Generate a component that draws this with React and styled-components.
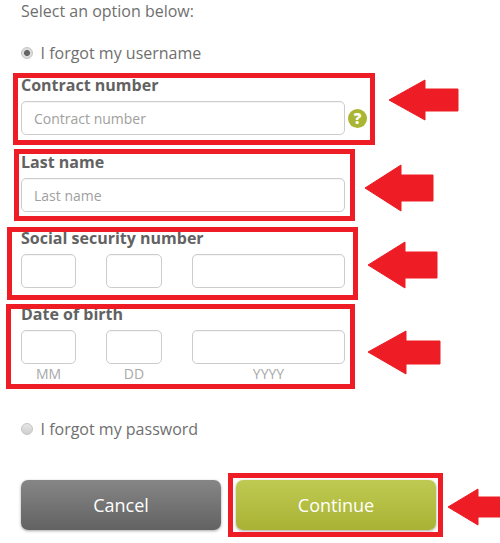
import React from 'react';
import styled, { createGlobalStyle } from 'styled-components';

const Global = createGlobalStyle`
  html, body {
    margin: 0;
    background: #fff;
    font-family: "Open Sans", "Liberation Sans", sans-serif;
  }
`;

const Page = styled.div`
  position: relative;
  width: 500px;
  height: 543px;
  overflow: hidden;
  padding-left: 21px;
  box-sizing: border-box;
  color: #6f6f6f;
`;

const Heading = styled.div`
  font-size: 16px;
  line-height: 22px;
  margin-bottom: 20px;
`;

const OptionRow = styled.label`
  display: flex;
  align-items: center;
  gap: 7.5px;
  font-size: 16px;
  line-height: 22px;
  margin-top: ${p => p.$top || 0}px;
`;

const Radio = styled.input.attrs({ type: 'radio', name: 'forgot' })`
  appearance: none;
  width: 12px;
  height: 12px;
  margin: 0;
  border-radius: 50%;
  border: 1px solid #c4c4c4;
  box-sizing: border-box;
  background: linear-gradient(#e6e6e6, #cfcfcf);

  &:checked {
    background: radial-gradient(circle, #666 0 2.6px, #dcdcdc 3.4px);
  }
`;

const Field = styled.div`
  margin-top: ${p => p.$top}px;
`;

const FieldLabel = styled.div`
  font-size: 16px;
  font-weight: 700;
  line-height: 20px;
  margin-bottom: 6px;
  color: #626262;
`;

const InputRow = styled.div`
  display: flex;
  align-items: center;
  gap: 3px;
`;

const TextBox = styled.input`
  display: block;
  width: ${p => p.$width || 324}px;
  height: 34px;
  padding: 0 12px;
  box-sizing: border-box;
  border: 1px solid #ccc;
  border-radius: 5px;
  background: #fff;
  box-shadow: inset 0 1px 1px rgba(0, 0, 0, 0.04);
  font-family: inherit;
  font-size: 14px;
  color: #666;

  &::placeholder {
    color: #a0a0a0;
    opacity: 1;
  }
`;

const HelpIcon = styled.span`
  display: block;
  flex: none;
  width: 19px;
  height: 19px;
  border-radius: 50%;
  background: #a9b533;
  color: #fff;
  font-size: 15px;
  font-weight: 800;
  line-height: 19px;
  text-align: center;
`;

const PartsGrid = styled.div`
  display: grid;
  grid-template-columns: 55px 56px 153px;
  column-gap: 30px;
  width: 324px;
`;

const PartHint = styled.div`
  font-size: 14px;
  line-height: 20px;
  text-align: center;
  color: #a8a8a8;
`;

const Buttons = styled.div`
  display: flex;
  gap: 15px;
  margin-top: 40px;
`;

const Button = styled.button`
  width: 200px;
  height: 50px;
  padding: 0;
  border: 0;
  border-radius: 7px;
  background: ${p => p.$primary
    ? 'linear-gradient(#bfca53, #a9b233)'
    : 'linear-gradient(#868686, #626262)'};
  box-shadow: 0 1px 3px rgba(0, 0, 0, 0.35);
  color: #fff;
  font-family: inherit;
  font-size: 18px;
`;

// red markup drawn over the form
const Frame = styled.div`
  position: absolute;
  left: ${p => p.$x}px;
  top: ${p => p.$y}px;
  width: ${p => p.$w}px;
  height: ${p => p.$h}px;
  box-sizing: border-box;
  border: 5px solid #ee1c25;
  pointer-events: none;
`;

const ArrowLayer = styled.svg`
  position: absolute;
  left: 0;
  top: 0;
  pointer-events: none;
`;

const frames = [
  { x: 13, y: 73, w: 362, h: 72 },
  { x: 14, y: 149, w: 341, h: 72 },
  { x: 7, y: 227, w: 351, h: 73 },
  { x: 6, y: 304, w: 349, h: 85 },
  { x: 228, y: 473, w: 215, h: 64 },
];

const arrows = [
  '389,100 425,80 425,89 458,89 458,111 425,111 425,120',
  '365,188 401,165 401,175 433,175 433,201 401,201 401,211',
  '368,265 405,242 405,252 437,252 437,278 405,278 405,288',
  '368,352 406,331 406,341 440,341 440,364 406,364 406,374',
  '448,507 478,489 478,497 500,497 500,517 478,517 478,525',
];

export default function App() {
  return (
    <Page>
      <Global />
      <Heading>Select an option below:</Heading>
      <OptionRow>
        <Radio defaultChecked />
        I forgot my username
      </OptionRow>

      <Field $top={11}>
        <FieldLabel>Contract number</FieldLabel>
        <InputRow>
          <TextBox placeholder="Contract number" />
          <HelpIcon>?</HelpIcon>
        </InputRow>
      </Field>

      <Field $top={17}>
        <FieldLabel>Last name</FieldLabel>
        <TextBox placeholder="Last name" />
      </Field>

      <Field $top={16}>
        <FieldLabel>Social security number</FieldLabel>
        <PartsGrid>
          <TextBox $width={55} />
          <TextBox $width={56} />
          <TextBox $width={153} />
        </PartsGrid>
      </Field>

      <Field $top={16}>
        <FieldLabel>Date of birth</FieldLabel>
        <PartsGrid>
          <TextBox $width={55} />
          <TextBox $width={56} />
          <TextBox $width={153} />
          <PartHint>MM</PartHint>
          <PartHint>DD</PartHint>
          <PartHint>YYYY</PartHint>
        </PartsGrid>
      </Field>

      <OptionRow $top={34}>
        <Radio />
        I forgot my password
      </OptionRow>

      <Buttons>
        <Button>Cancel</Button>
        <Button $primary>Continue</Button>
      </Buttons>

      {frames.map(f => (
        <Frame key={f.y} $x={f.x} $y={f.y} $w={f.w} $h={f.h} />
      ))}
      <ArrowLayer width="500" height="543" viewBox="0 0 500 543">
        {arrows.map(points => (
          <polygon key={points} points={points} fill="#ee1c25" stroke="#ee1c25" strokeWidth="1" strokeLinejoin="round" />
        ))}
      </ArrowLayer>
    </Page>
  );
}
